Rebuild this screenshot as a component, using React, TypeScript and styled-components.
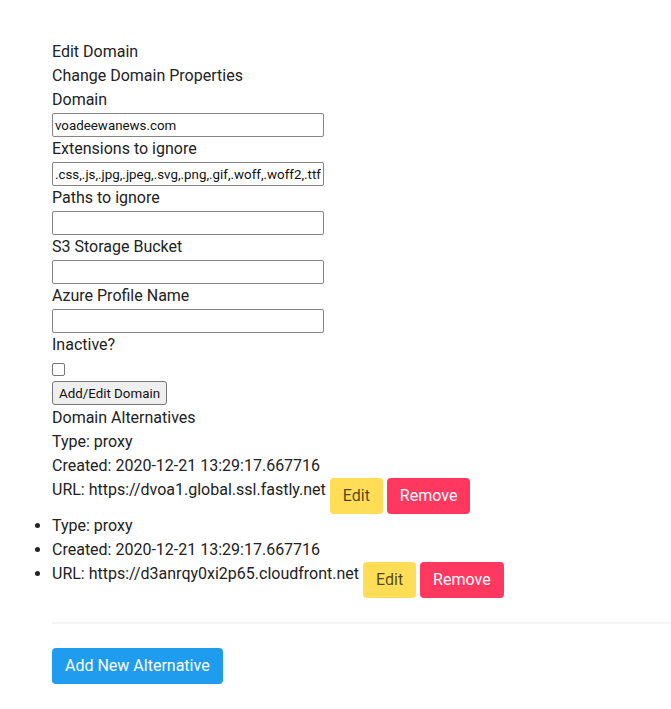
import React from "react";
import styled, { createGlobalStyle } from "styled-components";

const Global = createGlobalStyle`
  html, body { margin: 0; padding: 0; background: #fff; }
  body { font-family: Roboto, "Liberation Sans", sans-serif; font-size: 16px; line-height: 24px; color: #222; }
`;

const Page = styled.div`
  padding: 40px 0 24px 52px;
`;

const Line = styled.div`
  line-height: 24px;
`;

const TextInput = styled.input`
  display: block;
  box-sizing: border-box;
  width: 272px;
  height: 24px;
  margin: 1px 0 0 0;
  padding: 1px 2px;
  border: 1px solid #858585;
  border-radius: 2px;
  font-family: Roboto, "Liberation Sans", sans-serif;
  font-size: 13.33px;
  color: #111;
  background: #fff;
  outline: none;
`;

const CheckBox = styled.input`
  display: block;
  width: 13px;
  height: 13px;
  margin: 6px 0 5px 0;
  box-sizing: border-box;
  appearance: none;
  border: 1px solid #767676;
  border-radius: 2px;
  background: #fff;
`;

const NativeButton = styled.button`
  display: block;
  box-sizing: border-box;
  height: 24px;
  margin: 1px 0 1px 0;
  padding: 0 6px;
  border: 1px solid #767676;
  border-radius: 3px;
  background: #efefef;
  font-family: Roboto, "Liberation Sans", sans-serif;
  font-size: 13.33px;
  color: #111;
`;

const variants = {
  warning: { bg: "#ffdd57", fg: "rgba(0,0,0,0.7)" },
  danger: { bg: "#ff3860", fg: "#fff" },
  info: { bg: "#209cee", fg: "#fff" },
};

const Btn = styled.button<{ $v: keyof typeof variants }>`
  display: inline-flex;
  align-items: center;
  justify-content: center;
  vertical-align: top;
  box-sizing: border-box;
  height: 36px;
  padding: 0 12px;
  border: 1px solid transparent;
  border-radius: 4px;
  background: ${(p) => variants[p.$v].bg};
  color: ${(p) => variants[p.$v].fg};
  font-family: Roboto, "Liberation Sans", sans-serif;
  font-size: 16px;
  line-height: 24px;
  cursor: pointer;
`;

const List = styled.ul`
  margin: 0;
  padding: 0;
  list-style: disc outside;
`;

const Item = styled.li`
  line-height: 24px;
`;

const Rule = styled.hr`
  border: none;
  height: 2px;
  background: #f5f5f5;
  margin: 24px 0;
`;

const fields: [string, string][] = [
  ["Domain", "voadeewanews.com"],
  ["Extensions to ignore", ".css,.js,.jpg,.jpeg,.svg,.png,.gif,.woff,.woff2,.ttf"],
  ["Paths to ignore", ""],
  ["S3 Storage Bucket", ""],
  ["Azure Profile Name", ""],
];

export default function App() {
  return (
    <>
      <Global />
      <Page>
        <Line>Edit Domain</Line>
        <Line>Change Domain Properties</Line>
        {fields.map(([label, value]) => (
          <React.Fragment key={label}>
            <Line>{label}</Line>
            <TextInput defaultValue={value} />
          </React.Fragment>
        ))}
        <Line>Inactive?</Line>
        <CheckBox type="checkbox" />
        <NativeButton>Add/Edit Domain</NativeButton>
        <Line>Domain Alternatives</Line>
        <Line>Type: proxy</Line>
        <Line>Created: 2020-12-21 13:29:17.667716</Line>
        <Line>
          URL: https://dvoa1.global.ssl.fastly.net <Btn $v="warning">Edit</Btn>{" "}
          <Btn $v="danger">Remove</Btn>
        </Line>
        <List>
          <Item>Type: proxy</Item>
          <Item>Created: 2020-12-21 13:29:17.667716</Item>
          <Item>
            URL: https://d3anrqy0xi2p65.cloudfront.net <Btn $v="warning">Edit</Btn>{" "}
            <Btn $v="danger">Remove</Btn>
          </Item>
        </List>
        <Rule />
        <Btn $v="info">Add New Alternative</Btn>
      </Page>
    </>
  );
}
